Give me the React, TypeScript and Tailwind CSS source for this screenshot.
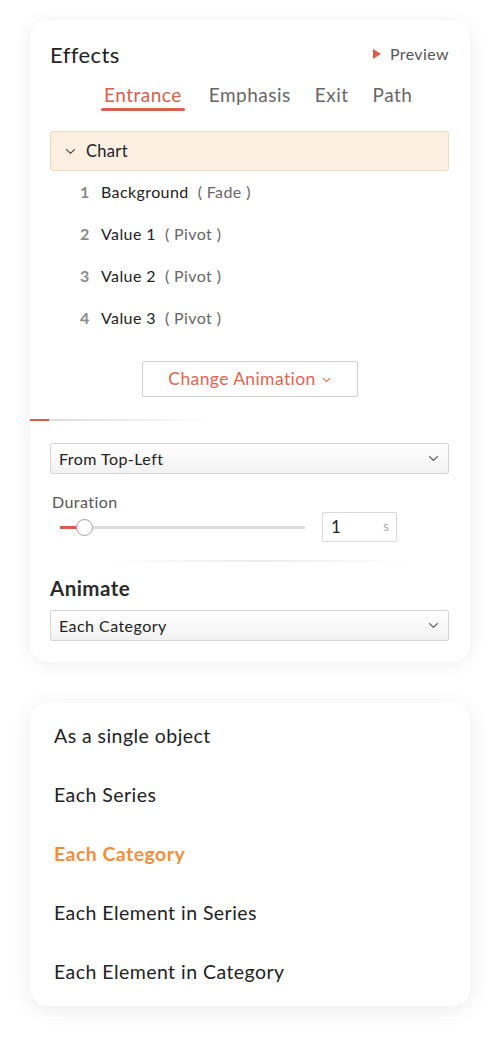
import React from "react";

const Chevron = ({ className = "" }: { className?: string }) => (
  <svg viewBox="0 0 12 8" className={className} fill="none" stroke="currentColor" strokeWidth="1.4" strokeLinecap="round" strokeLinejoin="round">
    <path d="M1.5 1.8 6 6.2 10.5 1.8" />
  </svg>
);

const Select = ({ label }: { label: string }) => (
  <div className="flex h-[31px] items-center justify-between rounded-[2px] border border-[#d4d4d4] bg-gradient-to-b from-white to-[#f2f2f2] pl-[8px] pr-[9px]">
    <span className="text-[16px] tracking-[0.45px] text-[#222]">{label}</span>
    <Chevron className="h-[7px] w-[11px] text-[#555]" />
  </div>
);

const items = [
  { n: 1, name: "Background", eff: "Fade" },
  { n: 2, name: "Value 1", eff: "Pivot" },
  { n: 3, name: "Value 2", eff: "Pivot" },
  { n: 4, name: "Value 3", eff: "Pivot" },
];

const options = [
  "As a single object",
  "Each Series",
  "Each Category",
  "Each Element in Series",
  "Each Element in Category",
];

export default function App() {
  return (
    <div className="min-h-[1044px] bg-white px-[30px] pt-[20px] pb-[38px]" style={{ fontFamily: "Lato, 'Open Sans', sans-serif" }}>
      <div className="w-[440px] rounded-[18px] bg-white pl-[20px] pr-[21px] pt-[20px] pb-[21px] shadow-[0_2px_18px_rgba(0,0,0,0.07)]">
        <div className="flex h-[28px] items-center justify-between">
          <span className="text-[22px] tracking-[0.4px] text-[#222]">Effects</span>
          <div className="flex items-center gap-[9px]">
            <svg viewBox="0 0 8 10" className="h-[10px] w-[8px]"><path d="M0 0 8 5 0 10Z" fill="#e05a47" /></svg>
            <span className="text-[16px] tracking-[0.4px] text-[#555]">Preview</span>
          </div>
        </div>
        <div className="mt-[14px] flex h-[29px] items-start gap-[24px] pl-[51px]">
          <div className="flex flex-col items-center">
            <span className="h-[26px] px-[3px] text-[19px] leading-[26px] tracking-[0.5px] text-[#d9604c]">Entrance</span>
            <div className="h-[3px] w-full rounded-full bg-[#d9604c]" />
          </div>
          <span className="h-[26px] text-[19px] leading-[26px] tracking-[0.5px] text-[#666]">Emphasis</span>
          <span className="h-[26px] text-[19px] leading-[26px] tracking-[0.5px] text-[#666]">Exit</span>
          <span className="h-[26px] text-[19px] leading-[26px] tracking-[0.5px] text-[#666]">Path</span>
        </div>
        <div className="mt-[20px] flex h-[40px] items-center gap-[10px] rounded-[3px] border border-[#f5d7b9] bg-[#fdf0e3] pl-[14px]">
          <Chevron className="h-[7px] w-[11px] text-[#444]" />
          <span className="text-[16.5px] tracking-[0.3px] text-[#222]">Chart</span>
        </div>
        {items.map((it) => (
          <div key={it.n} className="flex h-[42px] items-center pl-[30px]">
            <span className="w-[21px] text-[16px] font-bold text-[#8a8a8a]">{it.n}</span>
            <span className="text-[16px] tracking-[0.4px] text-[#222]">{it.name}</span>
            <span className="ml-[9px] text-[16px] tracking-[0.4px] text-[#666]">( {it.eff} )</span>
          </div>
        ))}
        <div className="mt-[22px] flex justify-center">
          <div className="flex h-[36px] w-[216px] items-center justify-center gap-[6px] rounded-[2px] border border-[#d0d0d0] bg-white">
            <span className="text-[17.5px] tracking-[0.4px] text-[#e0654f]">Change Animation</span>
            <Chevron className="mt-[2px] h-[6px] w-[9px] text-[#e0654f]" />
          </div>
        </div>
        <div className="-ml-[20px] mt-[22px] flex h-[2px] w-[180px]">
          <div className="h-full w-[19px] bg-[#e05a47]" />
          <div className="h-full flex-1 bg-gradient-to-r from-[#dcdcdc] to-transparent" />
        </div>
        <div className="mt-[22px]">
          <Select label="From Top-Left" />
        </div>
        <div className="mt-[18px] h-[20px] pl-[2px] text-[16px] leading-[20px] tracking-[0.45px] text-[#555]">Duration</div>
        <div className="flex h-[30px] items-center">
          <div className="relative ml-[10px] h-[30px] w-[245px]">
            <div className="absolute left-0 top-[14px] h-[3px] w-full rounded-full bg-[#dcdcdc]" />
            <div className="absolute left-0 top-[14px] h-[3px] w-[20px] bg-[#e05a47]" />
            <div className="absolute left-[16px] top-[7px] h-[17px] w-[17px] rounded-full border border-[#a0a0a0] bg-white" />
          </div>
          <div className="ml-[17px] flex h-[30px] w-[75px] items-center justify-between rounded-[2px] border border-[#d8d8d8] bg-white pl-[8px] pr-[7px]">
            <span className="text-[17px] text-[#222]">1</span>
            <span className="text-[13px] text-[#aaa]">s</span>
          </div>
        </div>
        <div className="ml-[50px] mt-[18px] h-[2px] w-[315px] bg-gradient-to-r from-transparent via-[#ececec] to-transparent" />
        <div className="mt-[14px] h-[24px] text-[20.5px] font-bold leading-[24px] tracking-[0.45px] text-[#2a2a2a]">Animate</div>
        <div className="mt-[10px]">
          <Select label="Each Category" />
        </div>
      </div>

      <div className="mt-[41px] w-[440px] rounded-[18px] bg-white pt-[3px] pb-[5px] pl-[24px] shadow-[0_4px_22px_rgba(0,0,0,0.08)]">
        {options.map((o) => (
          <div
            key={o}
            className={`flex h-[59px] items-center text-[19.5px] tracking-[0.45px] ${o === "Each Category" ? "font-bold text-[#f0903e]" : "text-[#222]"}`}
          >
            {o}
          </div>
        ))}
      </div>
    </div>
  );
}
